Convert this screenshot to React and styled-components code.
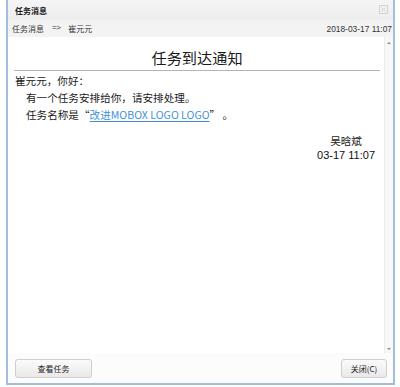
import React from "react";
import styled, { createGlobalStyle } from "styled-components";

const Global = createGlobalStyle`
  html, body { margin: 0; padding: 0; background: #ffffff; }
  body { font-family: "Noto Sans CJK SC", "Liberation Sans", sans-serif; color: #222; }
  * { box-sizing: border-box; }
`;

const Window = styled.div`
  margin-left: 6px;
  width: 389px;
  height: 385px;
  border: 2px solid #a3bddd;
  border-top: none;
  display: flex;
  flex-direction: column;
  background: #fff;
`;

const TitleBar = styled.div`
  height: 20px;
  flex: none;
  display: flex;
  align-items: center;
  justify-content: space-between;
  padding: 0 5px 0 7px;
  background: linear-gradient(#f5f5f5, #ededed);
  font-size: 8px;
  font-weight: bold;
  color: #1a1a1a;
`;

const CloseIcon = styled.svg`
  width: 9px;
  height: 9px;
  margin-top: -1px;
`;

const Crumbs = styled.div`
  height: 17px;
  flex: none;
  display: flex;
  align-items: center;
  justify-content: space-between;
  padding: 0 1px 0 4px;
  background: #f3f3f3;
  font-size: 8px;
  color: #333;
`;

const Path = styled.div`
  display: flex;
  gap: 8px;
`;

const Arrow = styled.span`
  font-family: "Liberation Sans", sans-serif;
  letter-spacing: -0.5px;
`;

const Stamp = styled.span`
  font-family: "Liberation Sans", sans-serif;
  font-size: 8.4px;
`;

const Main = styled.div`
  flex: 1;
  display: flex;
  min-height: 0;
  background: #fff;
`;

const Content = styled.div`
  flex: 1;
  padding: 10px 4px 0 6px;
`;

const Heading = styled.h1`
  margin: 0;
  font-size: 15.2px;
  line-height: 20px;
  font-weight: normal;
  text-align: center;
  color: #1a1a1a;
`;

const Rule = styled.div`
  height: 1px;
  background: #b4b4b4;
  margin-top: 3px;
`;

const Body = styled.div`
  margin-top: 1px;
  font-size: 10.6px;
  line-height: 17px;
  color: #1a1a1a;
`;

const Line = styled.div`
  padding-left: ${(p) => (p.$indent ? "12px" : "1px")};
`;

const Link = styled.a`
  color: #3f8fd8;
  text-decoration: underline;
  text-underline-offset: 2px;
`;

const Signature = styled.div`
  margin-top: 10px;
  display: flex;
  justify-content: flex-end;
  padding-right: 5px;
`;

const SigBlock = styled.div`
  text-align: center;
  font-size: 10.6px;
  line-height: 15px;
  color: #1a1a1a;
`;

const SigDate = styled.div`
  font-family: "Liberation Sans", sans-serif;
  font-size: 11px;
  color: #111;
`;

const ScrollBar = styled.div`
  width: 9px;
  flex: none;
  background: #f7f7f7;
  border-left: 1px solid #ececec;
  display: flex;
  flex-direction: column;
  justify-content: space-between;
  align-items: center;
  padding: 5px 0 3px;
`;

const Tri = styled.div`
  width: 0;
  height: 0;
  border-left: 2px solid transparent;
  border-right: 2px solid transparent;
  ${(p) =>
    p.$down
      ? "border-top: 2px solid #8a8a8a;"
      : "border-bottom: 2px solid #8a8a8a;"}
`;

const Footer = styled.div`
  height: 30px;
  flex: none;
  display: flex;
  justify-content: space-between;
  align-items: flex-start;
  padding: 6px 6px 0 7px;
  background: #fcfcfc;
`;

const Button = styled.button`
  height: 19px;
  width: ${(p) => p.$w}px;
  padding: 0;
  border: 1px solid #cfcfcf;
  border-radius: 3px;
  background: linear-gradient(#fbfbfb, #e9e9e9);
  font-family: "Noto Sans CJK SC", "Liberation Sans", sans-serif;
  font-size: 8px;
  color: #222;
`;

export default function App() {
  return (
    <>
      <Global />
      <Window>
        <TitleBar>
          <span>任务消息</span>
          <CloseIcon viewBox="0 0 9 9">
            <rect x="0.5" y="0.5" width="8" height="8" fill="none" stroke="#d2d2d2" />
            <path d="M2.5 2.5 L6.5 6.5 M6.5 2.5 L2.5 6.5" stroke="#d2d2d2" strokeWidth="1" />
          </CloseIcon>
        </TitleBar>
        <Crumbs>
          <Path>
            <span>任务消息</span>
            <Arrow>=&gt;</Arrow>
            <span>崔元元</span>
          </Path>
          <Stamp>2018-03-17 11:07</Stamp>
        </Crumbs>
        <Main>
          <Content>
            <Heading>任务到达通知</Heading>
            <Rule />
            <Body>
              <Line>崔元元，你好：</Line>
              <Line $indent>有一个任务安排给你，请安排处理。</Line>
              <Line $indent>
                任务名称是“<Link href="#">改进MOBOX LOGO LOGO</Link>” 。
              </Line>
            </Body>
            <Signature>
              <SigBlock>
                <div>吴晗斌</div>
                <SigDate>03-17 11:07</SigDate>
              </SigBlock>
            </Signature>
          </Content>
          <ScrollBar>
            <Tri />
            <Tri $down />
          </ScrollBar>
        </Main>
        <Footer>
          <Button $w={77}>查看任务</Button>
          <Button $w={46}>关闭(C)</Button>
        </Footer>
      </Window>
    </>
  );
}
